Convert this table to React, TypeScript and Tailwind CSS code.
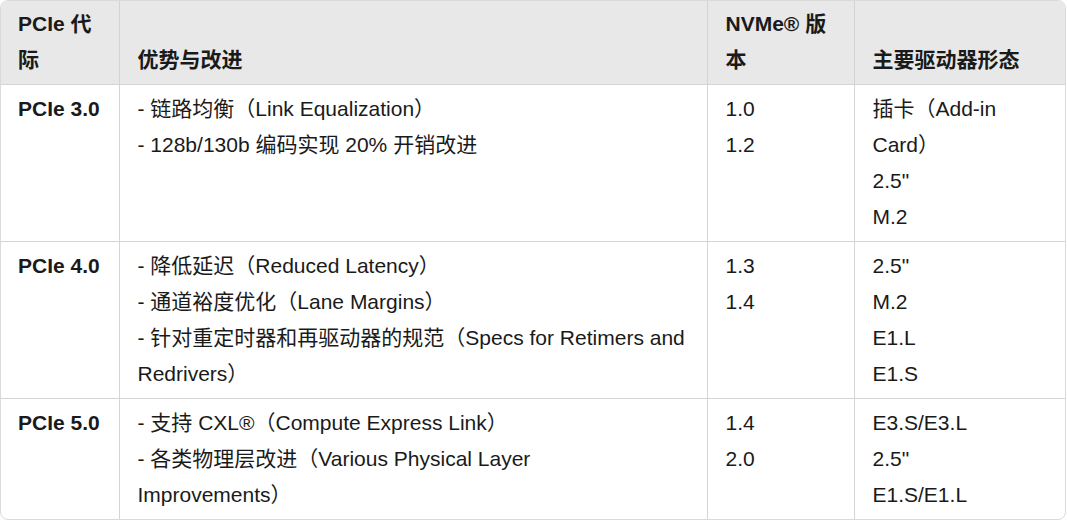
import React from 'react';

const rows = [
  {
    gen: 'PCIe 3.0',
    changes: ['- 链路均衡（Link Equalization）', '- 128b/130b 编码实现 20% 开销改进'],
    nvme: ['1.0', '1.2'],
    forms: ['插卡（Add-in Card）', '2.5"', 'M.2'],
  },
  {
    gen: 'PCIe 4.0',
    changes: [
      '- 降低延迟（Reduced Latency）',
      '- 通道裕度优化（Lane Margins）',
      '- 针对重定时器和再驱动器的规范（Specs for Retimers and Redrivers）',
    ],
    nvme: ['1.3', '1.4'],
    forms: ['2.5"', 'M.2', 'E1.L', 'E1.S'],
  },
  {
    gen: 'PCIe 5.0',
    // the source wraps this one before "Improvements"
    changes: ['- 支持 CXL®（Compute Express Link）', '- 各类物理层改进（Various Physical Layer\nImprovements）'],
    nvme: ['1.4', '2.0'],
    forms: ['E3.S/E3.L', '2.5"', 'E1.S/E1.L'],
  },
];

export default function App() {
  return (
    <div className="h-[521px] w-[1067px] bg-white">
      <div className="w-[1066px] overflow-hidden rounded-lg border border-[#dadada]">
        <table
          className="w-full table-fixed border-collapse text-[21px] leading-[36px] text-[#1a1a1a]"
          style={{ fontFamily: '"Liberation Sans", Arial, "Noto Sans CJK SC", sans-serif' }}
        >
          <colgroup>
            <col className="w-[118px]" />
            <col className="w-[588px]" />
            <col className="w-[147px]" />
            <col />
          </colgroup>
          <thead>
            <tr className="bg-[#e8e8e8]">
              <th className="border-r border-b border-[#d4d4d4] pt-[5px] pb-[6px] pl-[17px] pr-[18px] text-left align-bottom font-bold">PCIe 代际</th>
              <th className="border-r border-b border-[#d4d4d4] pt-[5px] pb-[6px] px-[18px] text-left align-bottom font-bold">优势与改进</th>
              <th className="border-r border-b border-[#d4d4d4] pt-[5px] pb-[6px] px-[18px] text-left align-bottom font-bold">NVMe® 版本</th>
              <th className="border-b border-[#d4d4d4] pt-[5px] pb-[6px] px-[18px] text-left align-bottom font-bold">主要驱动器形态</th>
            </tr>
          </thead>
          <tbody>
            {rows.map((r, i) => (
              <tr key={r.gen} className={i < rows.length - 1 ? 'border-b border-[#d4d4d4]' : ''}>
                <td className="border-r border-[#d4d4d4] py-[6px] pl-[17px] pr-[18px] align-top font-bold">{r.gen}</td>
                <td className="border-r border-[#d4d4d4] px-[18px] py-[6px] align-top">
                  {r.changes.map((c) => (
                    <div key={c} className="whitespace-pre-line">{c}</div>
                  ))}
                </td>
                <td className="border-r border-[#d4d4d4] px-[18px] py-[6px] align-top">
                  {r.nvme.map((n) => (
                    <div key={n}>{n}</div>
                  ))}
                </td>
                <td className="px-[18px] py-[6px] align-top">
                  {r.forms.map((f) => (
                    <div key={f}>{f}</div>
                  ))}
                </td>
              </tr>
            ))}
          </tbody>
        </table>
      </div>
    </div>
  );
}
